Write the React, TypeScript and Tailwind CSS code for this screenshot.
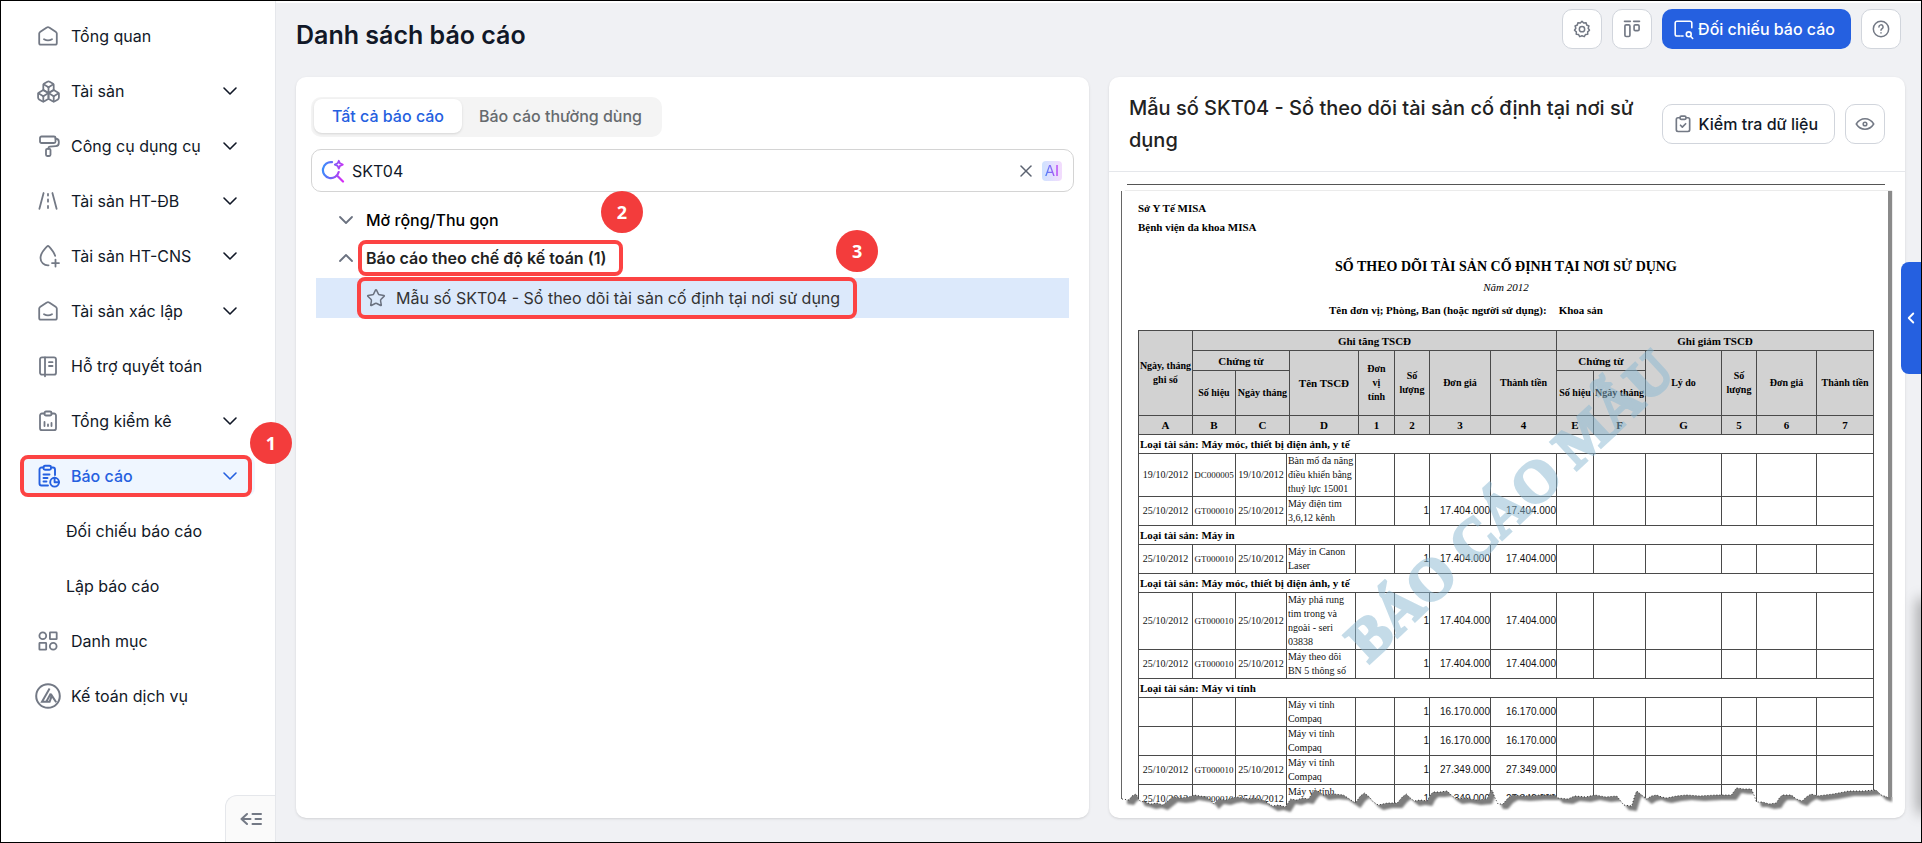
import type { ReactNode } from 'react'
import { Boxes, ChevronDown, ChevronLeft, ChevronUp, Star, X } from 'lucide-react'

type IconProps = { children: ReactNode; size?: number; strokeWidth?: number }

function Icon({ children, size = 24, strokeWidth = 1.8 }: IconProps) {
  return (
    <svg
      width={size}
      height={size}
      viewBox="0 0 24 24"
      fill="none"
      stroke="currentColor"
      strokeWidth={strokeWidth}
      strokeLinecap="round"
      strokeLinejoin="round"
      aria-hidden="true"
      className="shrink-0"
    >
      {children}
    </svg>
  )
}

const homeIcon = (
  <Icon>
    <path d="M3.2 9.6c0-.6.3-1.1.8-1.5l6.8-4.5c.7-.5 1.7-.5 2.4 0L20 8.1c.5.4.8.9.8 1.5v9.3c0 1-.8 1.8-1.8 1.8H5c-1 0-1.8-.8-1.8-1.8z" />
    <path d="M8 15.2c2.4 1.4 5.6 1.4 8 0" />
  </Icon>
)

const rollerIcon = (
  <Icon>
    <rect x="4" y="2.5" width="15.5" height="6.5" rx="1.5" />
    <path d="M19.5 4.5c2.2.2 3.3 1.2 3.3 3v1.5c0 2-1 3-3 3.2l-6 .5c-1 .1-1.5.8-1.5 2" />
    <rect x="10" y="14.8" width="4.5" height="7.2" rx="1.2" />
  </Icon>
)

const roadIcon = (
  <Icon>
    <path d="M7.6 4 3.4 19.8M16.4 4l4.2 15.8M12 5v1.6M12 10.5v2.2M12 17v2" />
  </Icon>
)

const dropIcon = (
  <Icon>
    <path d="M12.6 21.3C8 21.6 4.5 18.2 4.5 14c0-4 3.2-8.2 6.6-11.6a1.2 1.2 0 0 1 1.8 0c2.6 2.8 5.2 6.2 6.2 9.4M19.5 15.6v7M16 19.1h7" />
  </Icon>
)

const bookIcon = (
  <Icon>
    <rect x="4" y="3.3" width="16" height="17.4" rx="2" />
    <path d="M9 3.3v19M13 8.2h3.5M13 12h3.5" />
  </Icon>
)

const clipboardChartIcon = (
  <Icon>
    <path d="M8.5 4.5H6a2 2 0 0 0-2 2v12.7a2 2 0 0 0 2 2h12a2 2 0 0 0 2-2V6.5a2 2 0 0 0-2-2h-2.5" />
    <rect x="8.5" y="2.5" width="7" height="4" rx="1.5" />
    <path d="M8.5 13v4M12 15.5V17M15.5 14v3" />
  </Icon>
)

const reportIcon = (
  <Icon strokeWidth={1.9}>
    <path d="M7.5 3.5H5.5a2 2 0 0 0-2 2v14a2 2 0 0 0 2 2H12M15.5 3.5h1.5a2 2 0 0 1 2 2V11" />
    <rect x="7.5" y="1.8" width="7.5" height="4" rx="1.5" />
    <path d="M7.5 10.5h6M7.5 14h4M7.5 17.5h3" />
    <circle cx="18.6" cy="18.2" r="4.4" />
    <path d="M18.6 13.8v4.4H23" />
  </Icon>
)

const categoryIcon = (
  <Icon>
    <circle cx="6.8" cy="6.8" r="3.4" />
    <rect x="13.9" y="3.4" width="6.8" height="6.8" rx="0.5" />
    <rect x="3.4" y="13.9" width="6.8" height="6.8" rx="0.5" />
    <circle cx="17.2" cy="17.2" r="3.4" />
  </Icon>
)

const accountingIcon = (
  <svg width="26" height="26" viewBox="0 0 26 26" fill="none" stroke="currentColor" strokeWidth="2" aria-hidden="true">
    <circle cx="13" cy="13" r="11.8" />
    <path d="M14.6 5.5 7 18.8h7.6l2.2-6.2 4.4 6.7M15.8 10.5l-4.4 8" />
  </svg>
)

const menu = [
  { label: 'Tổng quan', icon: homeIcon },
  { label: 'Tài sản', icon: <Boxes size={25} strokeWidth={1.7} />, more: true },
  { label: 'Công cụ dụng cụ', icon: rollerIcon, more: true },
  { label: 'Tài sản HT-ĐB', icon: roadIcon, more: true },
  { label: 'Tài sản HT-CNS', icon: dropIcon, more: true },
  { label: 'Tài sản xác lập', icon: homeIcon, more: true },
  { label: 'Hỗ trợ quyết toán', icon: bookIcon },
  { label: 'Tổng kiểm kê', icon: clipboardChartIcon, more: true },
  {
    label: 'Báo cáo',
    icon: reportIcon,
    more: true,
    active: true,
    children: ['Đối chiếu báo cáo', 'Lập báo cáo'],
  },
  { label: 'Danh mục', icon: categoryIcon },
  { label: 'Kế toán dịch vụ', icon: accountingIcon },
]

function StepBadge({ step, className }: { step: number; className: string }) {
  return (
    <span
      className={`absolute z-10 flex size-[42px] items-center justify-center rounded-full bg-[#f33c3c] font-['Noto_Sans',sans-serif] text-lg font-bold text-white ${className}`}
    >
      {step}
    </span>
  )
}

function Highlight({ className }: { className: string }) {
  return (
    <span
      className={`pointer-events-none absolute rounded-lg border-4 border-[#fc4343] ${className}`}
    />
  )
}

function Sidebar() {
  return (
    <aside className="relative w-[275px] shrink-0 border-r border-gray-200 bg-white">
      <nav className="px-5 pt-[15px]">
        <ul className="space-y-[15px]">
          {menu.map((item) => (
            <li key={item.label} className="space-y-[15px]">
              <a
                href="#"
                className={
                  item.active
                    ? 'relative flex h-10 items-center rounded-lg bg-[#eff6ff] pr-[13px] pl-3.5 font-medium text-[#2560e0]'
                    : 'relative flex h-10 items-center rounded-lg pr-[13px] pl-3.5 text-[#111827]'
                }
              >
                <span
                  className={
                    item.active
                      ? 'mr-2.5 flex w-[26px] justify-center'
                      : 'mr-2.5 flex w-[26px] justify-center text-[#737985]'
                  }
                >
                  {item.icon}
                </span>
                <span className="flex-1 whitespace-nowrap">{item.label}</span>
                {item.more && <ChevronDown size={24} strokeWidth={1.6} />}
                {item.active && (
                  <>
                    <Highlight className="-inset-y-px right-[3px] -left-px" />
                    <StepBadge step={1} className="-top-[34px] -right-[37px]" />
                  </>
                )}
              </a>
              {item.children?.map((child) => (
                <a key={child} href="#" className="flex h-10 items-center pl-[45px] text-[#111827]">
                  {child}
                </a>
              ))}
            </li>
          ))}
        </ul>
      </nav>
      <button
        type="button"
        aria-label="Thu gọn menu"
        className="absolute right-0 bottom-0 flex h-[47px] w-[50px] items-center justify-center rounded-tl-xl border-t border-l border-gray-200 bg-[#fafafa] text-[#737985]"
      >
        <Icon strokeWidth={2}>
          <path d="M8 7l-5.500 5L8 17M2.500 12h9M13.500 7h8.500M16.500 12h5.500M13.500 17h8.500" />
        </Icon>
      </button>
    </aside>
  )
}

const iconButton =
  'flex size-10 shrink-0 items-center justify-center rounded-[10px] border border-gray-300 bg-white text-[#737985]'

function PageHeader() {
  return (
    <header className="flex items-center gap-2.5 pr-1">
      <h1 className="flex-1 self-end text-[25px] leading-7 font-semibold text-[#111827]">
        Danh sách báo cáo
      </h1>
      <button type="button" aria-label="Thiết lập" className={iconButton}>
        <Icon size={20}>
          <path d="M12 2.800l2 2.100 2.900-.5.7 2.800 2.700 1.200-.9 2.700 1.600 2.400-2.200 1.900.1 2.900-2.800.4-1.400 2.500-2.700-1.100-2.700 1.100-1.400-2.500-2.800-.4.1-2.900L3 13.500l1.600-2.400-.9-2.700 2.700-1.200.7-2.800 2.900.5z" />
          <circle cx="12" cy="12.200" r="3.200" />
        </Icon>
      </button>
      <button type="button" aria-label="Bố cục" className={iconButton}>
        <Icon size={20} strokeWidth={2}>
          <path d="M3 2.800h7M14 2.800h7" />
          <rect x="3.500" y="7" width="6" height="14" rx="1.500" />
          <rect x="14.500" y="7" width="6" height="7" rx="1.500" />
        </Icon>
      </button>
      <button
        type="button"
        className="flex h-10 shrink-0 items-center gap-1 rounded-[10px] bg-[#2560e0] pr-4 pl-[11px] font-medium text-white"
      >
        <Icon size={21}>
          <path d="M21.500 10V4.500a2 2 0 0 0-2-2h-15a2 2 0 0 0-2 2v13a2 2 0 0 0 2 2H8M9.500 19.500h2" />
          <circle cx="18" cy="17.500" r="2.800" />
          <path d="m20 19.700 2.500 2.600" />
        </Icon>
        Đối chiếu báo cáo
      </button>
      <button type="button" aria-label="Trợ giúp" className={iconButton}>
        <Icon size={20}>
          <circle cx="12" cy="12" r="9.200" />
          <path d="M9.500 9.500a2.500 2.500 0 1 1 3.700 2.200c-.8.4-1.200.9-1.200 1.700M12 16.600v.1" />
        </Icon>
      </button>
    </header>
  )
}

function ReportList() {
  return (
    <section className="rounded-[10px] bg-white px-[15px] pt-5 shadow-sm">
      <div role="tablist" className="flex h-10 w-fit rounded-[10px] bg-[#f4f4f4] px-[3px] pt-0.5 pb-1 font-medium">
        <button
          type="button"
          role="tab"
          aria-selected="true"
          className="rounded-lg bg-white px-[18px] text-[#2560e0] shadow-sm"
        >
          Tất cả báo cáo
        </button>
        <button type="button" role="tab" aria-selected="false" className="px-[17px] text-[#666a6e]">
          Báo cáo thường dùng
        </button>
      </div>

      <div className="mt-3 flex h-[43px] items-center rounded-[10px] border border-[#d4d4d4] pr-[11px] pl-[9px]">
        <svg width="24" height="24" viewBox="0 0 24 24" fill="none" aria-hidden="true" className="shrink-0">
          <defs>
            <linearGradient id="search-ai" x1="0" y1="0" x2="24" y2="4" gradientUnits="userSpaceOnUse">
              <stop stopColor="#2b9bff" />
              <stop offset="0.500" stopColor="#6a66f5" />
              <stop offset="1" stopColor="#d62df5" />
            </linearGradient>
          </defs>
          <path
            d="M11 3.200a8 8 0 1 0 6.700 9.800M16.500 17l5.500 5.500"
            stroke="url(#search-ai)"
            strokeWidth="2.200"
            strokeLinecap="round"
          />
          <path
            d="M17.800 1.800l1.200 2.600 2.800 1.200-2.800 1.200-1.200 2.800-1.200-2.800-2.800-1.200 2.800-1.200z"
            stroke="url(#search-ai)"
            strokeWidth="1.800"
            strokeLinejoin="round"
          />
        </svg>
        <input
          type="text"
          aria-label="Tìm kiếm báo cáo"
          defaultValue="SKT04"
          className="ml-[7px] min-w-0 flex-1 bg-transparent text-[#111827] outline-none"
        />
        <button type="button" aria-label="Xóa" className="mr-[6px] text-[#5b6270]">
          <X size={20} strokeWidth={1.8} />
        </button>
        <span className="flex size-5 items-center justify-center rounded bg-linear-to-r from-[#cfe2ff] to-[#f3dcfd]">
          <span className="bg-linear-to-r from-[#3b82f6] to-[#c026f5] bg-clip-text text-[15px] leading-5 text-transparent">
            AI
          </span>
        </span>
      </div>

      <ul className="mx-[5px] mt-2.5">
        <li className="flex h-9 items-center pl-[18px] font-medium text-black">
          <button type="button" aria-label="Mở rộng" className="mr-2 text-[#6b7280]">
            <ChevronDown size={24} strokeWidth={1.8} />
          </button>
          Mở rộng/Thu gọn
        </li>
        <li>
          <div className="flex h-10 items-center pl-[18px] font-semibold text-[#222]">
            <button type="button" aria-label="Thu gọn" className="mr-2 text-[#6b7280]">
              <ChevronUp size={24} strokeWidth={1.8} />
            </button>
            <span className="relative">
              Báo cáo theo chế độ kế toán (1)
              <Highlight className="-inset-y-1.5 -right-[17px] -left-2" />
              <StepBadge step={2} className="-top-[55px] left-[235px]" />
            </span>
          </div>
          <ul>
            <li className="flex h-10 items-center bg-[#dce9fb] pl-[50px] text-[#333]">
              <a href="#" className="relative flex items-center whitespace-nowrap">
                <Star size={20} strokeWidth={1.8} className="mr-2.5 shrink-0 text-[#6b7280]" />
                Mẫu số SKT04 - Sổ theo dõi tài sản cố định tại nơi sử dụng
                <Highlight className="-inset-y-[9px] -right-[17px] -left-[9px]" />
                <StepBadge step={3} className="-top-14 -right-[38px]" />
              </a>
            </li>
          </ul>
        </li>
      </ul>
    </section>
  )
}

type Line = {
  group?: string
  date?: string
  code?: string
  name?: string
  qty?: string
  amount?: string
  height?: string
}

const lines: Line[] = [
  { group: 'Loại tài sản: Máy móc, thiết bị điện ảnh, y tế' },
  { date: '19/10/2012', code: 'DC000005', name: 'Bàn mổ đa năng điều khiển bằng thuỷ lực 15001', height: 'h-[43px]' },
  { date: '25/10/2012', code: 'GT000010', name: 'Máy điện tim 3,6,12 kênh', qty: '1', amount: '17.404.000', height: 'h-[29px]' },
  { group: 'Loại tài sản: Máy in' },
  { date: '25/10/2012', code: 'GT000010', name: 'Máy in Canon Laser', qty: '1', amount: '17.404.000', height: 'h-[29px]' },
  { group: 'Loại tài sản: Máy móc, thiết bị điện ảnh, y tế' },
  { date: '25/10/2012', code: 'GT000010', name: 'Máy phá rung tim trong và ngoài - seri 03838', qty: '1', amount: '17.404.000', height: 'h-[57px]' },
  { date: '25/10/2012', code: 'GT000010', name: 'Máy theo dõi BN 5 thông số', qty: '1', amount: '17.404.000', height: 'h-[29px]' },
  { group: 'Loại tài sản: Máy vi tính' },
  { name: 'Máy vi tính Compaq', qty: '1', amount: '16.170.000', height: 'h-[29px]' },
  { name: 'Máy vi tính Compaq', qty: '1', amount: '16.170.000', height: 'h-[29px]' },
  { date: '25/10/2012', code: 'GT000010', name: 'Máy vi tính Compaq', qty: '1', amount: '27.349.000', height: 'h-[29px]' },
  { date: '25/10/2012', code: 'GT000010', name: 'Máy vi tính Compaq', qty: '1', amount: '27.349.000', height: 'h-[29px]' },
]

const cell = 'border border-[#4a4a4a] p-0'
const numberCell = "border border-[#4a4a4a] p-0 text-right font-['Liberation_Sans_Narrow','Liberation_Sans',sans-serif]"

function LedgerTable() {
  return (
    <table className="w-full table-fixed border-collapse border border-[#222] text-[10px] leading-[14px] text-[#111]">
      <colgroup>
        <col className="w-[54px]" />
        <col className="w-[43px]" />
        <col className="w-[51px]" />
        <col className="w-[3px]" />
        <col className="w-[66px]" />
        <col className="w-[3px]" />
        <col className="w-[36px]" />
        <col className="w-[35px]" />
        <col className="w-[61px]" />
        <col className="w-[66px]" />
        <col className="w-[37px]" />
        <col className="w-[52px]" />
        <col className="w-[76px]" />
        <col className="w-[35px]" />
        <col className="w-[60px]" />
        <col className="w-[57px]" />
      </colgroup>
      <thead className="bg-[#d2d2d2] text-black">
        <tr className="h-5">
          <th rowSpan={3} className={cell}>Ngày, tháng ghi sổ</th>
          <th colSpan={9} className={`${cell} text-[11px]`}>Ghi tăng TSCĐ</th>
          <th colSpan={6} className={`${cell} text-[11px]`}>Ghi giảm TSCĐ</th>
        </tr>
        <tr className="h-5">
          <th colSpan={3} className={`${cell} text-[11px]`}>Chứng từ</th>
          <th colSpan={2} rowSpan={2} className={`${cell} text-[11px]`}>Tên TSCĐ</th>
          <th rowSpan={2} className={`${cell} px-1`}>Đơn vị tính</th>
          <th rowSpan={2} className={cell}>Số lượng</th>
          <th rowSpan={2} className={cell}>Đơn giá</th>
          <th rowSpan={2} className={cell}>Thành tiền</th>
          <th colSpan={2} className={`${cell} text-[11px]`}>Chứng từ</th>
          <th rowSpan={2} className={cell}>Lý do</th>
          <th rowSpan={2} className={cell}>Số lượng</th>
          <th rowSpan={2} className={cell}>Đơn giá</th>
          <th rowSpan={2} className={cell}>Thành tiền</th>
        </tr>
        <tr className="h-[45px]">
          <th className={`${cell} whitespace-nowrap`}>Số hiệu</th>
          <th colSpan={2} className={`${cell} whitespace-nowrap`}>Ngày tháng</th>
          <th className={`${cell} whitespace-nowrap`}>Số hiệu</th>
          <th className={`${cell} whitespace-nowrap`}>Ngày tháng</th>
        </tr>
        <tr className="h-[19px] text-[11px]">
          <th className={cell}>A</th>
          <th className={cell}>B</th>
          <th colSpan={2} className={cell}>C</th>
          <th colSpan={2} className={cell}>D</th>
          {['1', '2', '3', '4', 'E', 'F', 'G', '5', '6', '7'].map((c) => (
            <th key={c} className={cell}>{c}</th>
          ))}
        </tr>
      </thead>
      <tbody>
        {lines.map((l, i) =>
          l.group ? (
            <tr key={i} className="h-[19px]">
              <th colSpan={16} className={`${cell} pl-px text-left text-[11px] text-black`}>
                {l.group}
              </th>
            </tr>
          ) : (
            <tr key={i} className={l.height}>
              <td className={`${cell} text-center`}>{l.date}</td>
              <td className={`${cell} text-center text-[9px]`}>{l.code}</td>
              <td className={`${cell} text-center`}>{l.date}</td>
              <td colSpan={2} className={`${cell} pl-px`}>{l.name}</td>
              <td colSpan={2} className={cell} />
              <td className={numberCell}>{l.qty}</td>
              <td className={numberCell}>{l.amount}</td>
              <td className={numberCell}>{l.amount}</td>
              <td className={cell} />
              <td className={cell} />
              <td className={cell} />
              <td className={cell} />
              <td className={cell} />
              <td className={cell} />
            </tr>
          ),
        )}
      </tbody>
    </table>
  )
}

const tornEdge =
  '1,21 8,22 11,18 15,16 19,23 24,24 30,26 36,25 42,27 47,23 52,19 60,20 68,19 73,17 79,18 85,19 90,22 93,26 98,21 105,22 111,20 117,19 125,21 133,20 142,22 147,25 152,28 158,27 165,29 170,21 176,22 182,20 188,21 192,15 195,12 199,14 203,17 213,16 223,17 229,21 235,25 240,18 244,15 249,19 253,24 258,27 267,25 277,25 282,19 286,16 290,20 294,23 300,22 307,23 310,17 313,14 320,14 327,13 332,18 337,21 345,20 356,22 367,21 369,16 372,12 375,20 378,26 383,26 388,20 393,17 405,18 420,17 435,17 438,20 448,21 455,18 466,19 475,17 486,19 497,18 501,23 504,27 512,28 515,18 517,13 522,17 527,21 532,18 537,17 542,19 547,20 557,18 567,17 580,18 597,17 612,17 617,10 624,11 632,11 635,18 637,24 643,24 650,26 657,25 660,20 663,17 672,17 677,21 683,23 687,19 692,16 698,18 714,16 730,13 744,13 757,12 762,17 768,19'

// bottom of the sample sheet: everything under the tear is white, with the sheet's shadow on it
function TornEdge() {
  return (
    <svg
      viewBox="0 0 774 40"
      preserveAspectRatio="none"
      className="absolute bottom-0 left-0 h-10 w-full"
      aria-hidden="true"
    >
      <defs>
        <clipPath id="under-tear">
          <polygon points={`0,21 ${tornEdge} 774,19 774,40 0,40`} />
        </clipPath>
        <filter id="tear-blur" x="-5%" y="-50%" width="110%" height="200%">
          <feGaussianBlur stdDeviation="0.9" />
        </filter>
      </defs>
      <g clipPath="url(#under-tear)">
        <rect width="774" height="40" fill="#fff" />
        <polygon
          points={`1,-10 ${tornEdge} 768,-10`}
          transform="translate(5 5)"
          fill="#7d7d7d"
          filter="url(#tear-blur)"
        />
      </g>
      <polyline points={tornEdge} fill="none" stroke="#333" strokeWidth="1" strokeDasharray="1 2" />
    </svg>
  )
}

function ReportPreview() {
  return (
    <section className="flex flex-col rounded-[10px] bg-white shadow-sm">
      <div className="flex items-start gap-2.5 border-b border-gray-200 px-5 py-[15px]">
        <h2 className="flex-1 text-xl leading-8 font-medium text-[#222]">
          Mẫu số SKT04 - Sổ theo dõi tài sản cố định tại nơi sử dụng
        </h2>
        <button
          type="button"
          className="mt-3 flex h-10 shrink-0 items-center gap-1.5 rounded-[10px] border border-gray-300 bg-white pr-4 pl-2.5 font-medium text-[#111827]"
        >
          <span className="text-[#737985]">
            <Icon size={20} strokeWidth={2}>
              <path d="M8 4.500H6a2 2 0 0 0-2 2V19a2 2 0 0 0 2 2h12a2 2 0 0 0 2-2V6.500a2 2 0 0 0-2-2h-2" />
              <rect x="8.500" y="2.500" width="7" height="4" rx="1.500" />
              <path d="m9 13.500 2.200 2.200 4-4" />
            </Icon>
          </span>
          Kiểm tra dữ liệu
        </button>
        <button type="button" aria-label="Xem trước" className={`${iconButton} mt-3`}>
          <Icon size={20}>
            <path d="M1.500 12c2.700-4.200 6.300-6.200 10.500-6.200s7.800 2 10.500 6.200c-2.700 4.200-6.300 6.200-10.500 6.200s-7.800-2-10.500-6.200z" />
            <circle cx="12" cy="12" r="2.200" />
          </Icon>
        </button>
      </div>

      <div className="relative mx-3 mt-3 flex-1 overflow-hidden font-['Liberation_Serif',serif]">
        <div className="mr-2 ml-1.5 border-t border-[#555]" />
        <div className="mt-1.5 mr-[5px] min-h-full border-l border-[#666] pt-[8px] pr-[14px] pl-4 text-black shadow-[4px_0_1px_0_#8a8a8a]">
          <div className="text-[11px] leading-[19px] font-bold">
            <p>Sở Y Tế MISA</p>
            <p>Bệnh viện đa khoa MISA</p>
          </div>
          <div className="mt-5 text-center text-[11px] leading-5">
            <h3 className="text-[14px] leading-5 font-bold">SỔ THEO DÕI TÀI SẢN CỐ ĐỊNH TẠI NƠI SỬ DỤNG</h3>
            <p className="italic">Năm 2012</p>
            <p className="mt-[3px] mr-20 mb-2.5 flex justify-center gap-3 font-bold">
              <span>Tên đơn vị; Phòng, Ban (hoặc người sử dụng):</span>
              <span>Khoa sản</span>
            </p>
          </div>
          <div className="relative">
            <LedgerTable />
            <div className="pointer-events-none absolute inset-x-0 top-0 flex h-[352px] items-center justify-center pl-2 opacity-50">
              <span className="-rotate-[43deg] text-[58px] font-bold whitespace-nowrap text-[#8bb9d2] [-webkit-text-stroke:3px_#8bb9d2]">
                BÁO CÁO MẪU
              </span>
            </div>
          </div>
        </div>
        <TornEdge />
      </div>
    </section>
  )
}

export default function App() {
  return (
    <div className="relative flex min-h-screen overflow-hidden border border-black bg-[#f0f1f4] font-['Inter',sans-serif] text-base leading-6">
      <Sidebar />
      <main className="flex min-w-0 flex-1 flex-col border-t-2 border-white pt-1.5 pr-4 pb-6 pl-5">
        <PageHeader />
        <div className="mt-7 grid flex-1 grid-cols-[793fr_796fr] gap-5">
          <ReportList />
          <ReportPreview />
        </div>
      </main>
      <button
        type="button"
        aria-label="Mở bảng bên"
        className="absolute top-[261px] right-0 flex h-28 w-5 items-center justify-center rounded-l-lg bg-[#2560e0] text-white"
      >
        <ChevronLeft size={18} strokeWidth={2.5} />
      </button>
      <div className="pointer-events-none absolute -right-1 bottom-8 h-52 w-1 shadow-[0_0_14px_3px_rgba(0,0,0,0.4)]" />
    </div>
  )
}
